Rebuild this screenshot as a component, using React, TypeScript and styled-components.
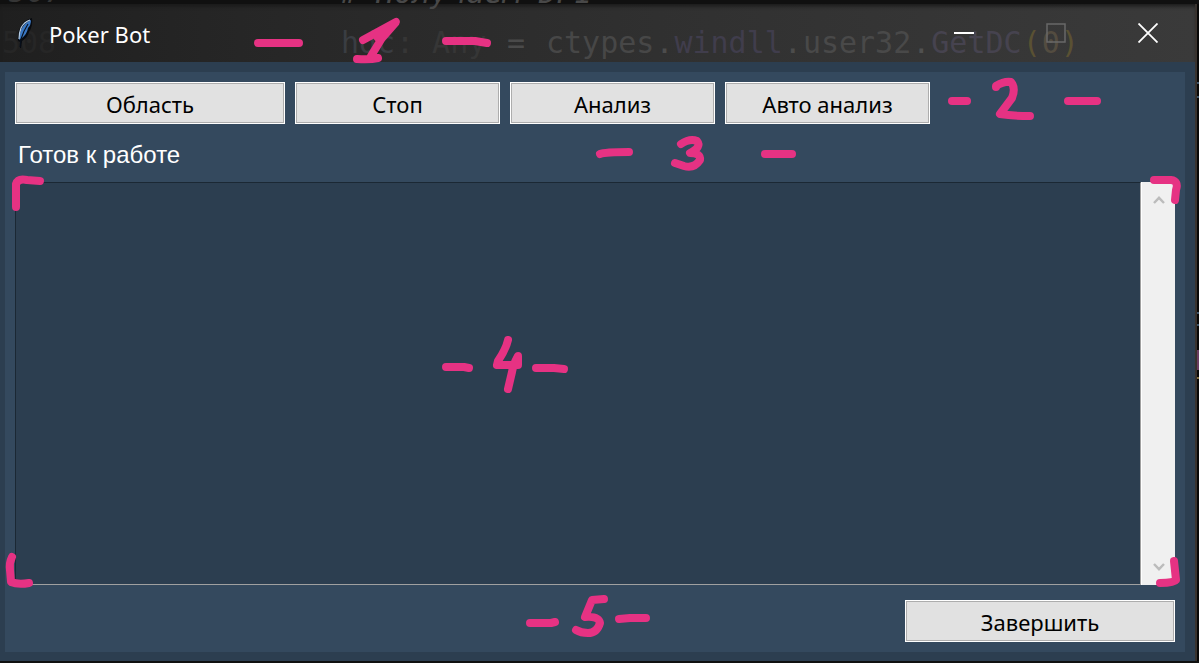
import React from "react";
import styled, { createGlobalStyle } from "styled-components";

const GlobalStyle = createGlobalStyle`
  *, *::before, *::after { box-sizing: border-box; }
  body { margin: 0; background: #0c0c0c; }
`;

const uiFont = `"Noto Sans", "Open Sans", sans-serif`;

const Desktop = styled.div`
  position: relative;
  display: flex;
  min-height: 100vh;
  padding: 4px 0 2px;
  background: #101010;
  overflow: hidden;
`;

const AppWindow = styled.main`
  flex: 1;
  min-width: 0;
  display: flex;
  flex-direction: column;
  background: #2c3e50;
`;

const EdgeStrip = styled.svg`
  flex: none;
  width: 4px;
  height: 657px;
`;

const TitleBar = styled.header`
  position: relative;
  height: 58px;
  display: flex;
  align-items: center;
  padding: 0 0 0 14px;
  gap: 15px;
  background: linear-gradient(90deg, #1f1f1f 0%, #262626 20%, #303030 55%, #3a3a3a 100%);
  box-shadow: inset 0 4px 4px -2px #181818;
`;

const Feather = styled.svg`
  position: relative;
  width: 20px;
  height: 32px;
`;

const Title = styled.h1`
  position: relative;
  flex: 1;
  margin: 0;
  padding-top: 2px;
  font: 400 22px/32px ${uiFont};
  color: #fff;
`;

const Backdrop = styled.div`
  position: absolute;
  inset: 0;
  pointer-events: none;
  white-space: pre;
  font: 30px/36px "DejaVu Sans Mono", monospace;
`;

const CodeRun = styled.div<{ $x: number; $y: number; $color: string; $italic?: boolean }>`
  position: absolute;
  left: ${(p) => p.$x}px;
  top: ${(p) => p.$y}px;
  display: flex;
  gap: 1px;
  color: ${(p) => p.$color};
  font-style: ${(p) => (p.$italic ? "italic" : "normal")};
`;

const Token = styled.span<{ $color: string }>`
  color: ${(p) => p.$color};
`;

const Caption = styled.div`
  position: relative;
  display: flex;
  align-self: stretch;
  margin-right: 1px;
`;

const CaptionButton = styled.button`
  display: grid;
  place-items: center;
  width: 92px;
  padding: 0;
  border: 0;
  background: transparent;
  color: #fff;
  &:disabled { color: #686868; }
`;

const Panel = styled.section`
  flex: 1;
  display: flex;
  flex-direction: column;
  margin: 10px 10px 9px 5px;
  padding: 10px;
  background: #34495e;
`;

const Toolbar = styled.div`
  display: flex;
  gap: 10px;
`;

const PushButton = styled.button<{ $wide?: boolean }>`
  width: ${(p) => (p.$wide ? 270 : 205)}px;
  height: 42px;
  padding: 2px 0 0;
  border: 1px solid #fff;
  box-shadow: inset 0 0 0 1px #adadad;
  background: #e1e1e1;
  color: #000;
  font: 22px/32px ${uiFont};
`;

const Status = styled.p`
  margin: 14px 0 10px;
  padding: 0 3px;
  font: 24px/34px "Liberation Sans", Arial, sans-serif;
  color: #fff;
`;

const LogArea = styled.div`
  flex: 1;
  display: flex;
  min-height: 200px;
`;

const Log = styled.textarea`
  flex: 1;
  min-width: 0;
  margin: 0;
  padding: 4px;
  resize: none;
  outline: 0;
  border: 1px solid;
  border-color: #1b2834 #a0a0a0 #a0a0a0 #1b2834;
  border-radius: 0;
  background: #2c3e50;
  color: #fff;
  font: 22px/32px ${uiFont};
`;

const ScrollTrack = styled.div`
  width: 34px;
  display: flex;
  flex-direction: column;
  justify-content: space-between;
  border-left: 1px solid #fff;
  background: #f0f0f0;
`;

const ScrollButton = styled.button`
  display: grid;
  place-items: center;
  height: 36px;
  padding: 0;
  border: 0;
  background: transparent;
`;

const Footer = styled.footer`
  display: flex;
  justify-content: flex-end;
  padding-top: 15px;
`;

const Marker = styled.svg`
  position: absolute;
  inset: 0;
  width: 100%;
  height: 100%;
  pointer-events: none;
  fill: none;
  stroke: #e63283;
  stroke-width: 8;
  stroke-linecap: round;
  stroke-linejoin: round;
`;

const callTokens: [string, string][] = [
  ["ctypes", "#474747"],
  [".", "#4c4c4c"],
  ["windll", "#403d4c"],
  [".", "#4c4c4c"],
  ["user32", "#494949"],
  [".", "#505050"],
  ["GetDC", "#46434f"],
  ["(", "#5a5133"],
  ["0", "#534c40"],
  [")", "#5a5133"],
];

const strokes = [
  "M258 43H299",
  "M363 40L396 22L382 38L371 56M378 38L390 28M357 59Q370 60 378 58",
  "M446 41H475L487 43",
  "M952 101H967",
  "M996 87V86Q1004 81 1011 82Q1016 88 1012 98L1000 114Q1012 116 1030 116",
  "M1068 101H1097",
  "M600 154Q605 152 629 152",
  "M681 144Q690 138 697 141Q702 147 690 153Q701 153 700 160Q694 169 684 166L675 163",
  "M765 154H792",
  "M446 367H464L469 368",
  "M508 340Q506 349 498 361L497 365H518V356Q513 365 512 372L508 389",
  "M536 368H554L564 369",
  "M530 623H551L555 622",
  "M604 599L592 600L585 617Q599 616 600 623Q597 633 588 633Q581 633 576 630",
  "M619 619L630 618H646",
  "M16 207V184Q18 178 27 180L40 181",
  "M1154 180H1171Q1179 181 1176 190L1175 200",
  "M12 557Q9 563 10 570L11 582Q18 585 29 583",
  "M1174 561L1176 580Q1174 583 1160 583",
];

function Chevron({ down }: { down?: boolean }) {
  return (
    <svg width="12" height="10" viewBox="0 0 12 10" fill="none" stroke="#bcbcbc" strokeWidth="2.4">
      <path d={down ? "M1 2L6 7.2L11 2" : "M1 8L6 2.8L11 8"} />
    </svg>
  );
}

export default function App() {
  return (
    <Desktop>
      <GlobalStyle />
      <AppWindow>
        <TitleBar>
          <Backdrop aria-hidden="true">
            <CodeRun $x={9} $y={-30} $color="#353535" $italic>507</CodeRun>
            <CodeRun $x={340} $y={-29} $color="#484848" $italic># Получаем DPI</CodeRun>
            <CodeRun $x={2} $y={21} $color="#262626">508</CodeRun>
            <CodeRun $x={341} $y={21} $color="#3a3d42">hdc</CodeRun>
            <CodeRun $x={396} $y={21} $color="#363636">: Any</CodeRun>
            <CodeRun $x={507} $y={21} $color="#4a4a4a">=</CodeRun>
            <CodeRun $x={546} $y={21} $color="#474747">
              {callTokens.map(([text, color], i) => (
                <Token key={i} $color={color}>{text}</Token>
              ))}
            </CodeRun>
          </Backdrop>
          <Feather viewBox="0 0 20 32" aria-hidden="true">
            <path d="M18 1Q10 3 7 9Q3 16 4 24L6 25L6 31H7L8 24Q14 20 15 15Q19 9 18 1Z" fill="#080b10" />
            <path d="M17 3Q10 6 7 13Q5 18 5 23L8 21Q13 17 14 11Q17 8 17 3Z" fill="#3a78c4" />
            <path d="M16 3Q10 5 7 11Q5 16 5 22" fill="none" stroke="#b7cee5" strokeWidth="1.2" />
            <path d="M14 7Q10 13 7 22L6 30" fill="none" stroke="#07101c" strokeWidth="1.1" />
          </Feather>
          <Title>Poker Bot</Title>
          <Caption>
            <CaptionButton aria-label="Свернуть">
              <svg width="20" height="20"><path d="M0 10H20" stroke="currentColor" strokeWidth="2" /></svg>
            </CaptionButton>
            <CaptionButton aria-label="Развернуть" disabled>
              <svg width="20" height="20" fill="none"><rect x="1" y="1" width="18" height="18" stroke="currentColor" strokeWidth="1.5" /></svg>
            </CaptionButton>
            <CaptionButton aria-label="Закрыть">
              <svg width="20" height="20"><path d="M.5 .5L19.5 19.5M19.5 .5L.5 19.5" stroke="currentColor" strokeWidth="1.8" /></svg>
            </CaptionButton>
          </Caption>
        </TitleBar>
        <Panel>
          <Toolbar>
            <PushButton $wide>Область</PushButton>
            <PushButton>Стоп</PushButton>
            <PushButton>Анализ</PushButton>
            <PushButton>Авто анализ</PushButton>
          </Toolbar>
          <Status role="status">Готов к работе</Status>
          <LogArea>
            <Log aria-label="Журнал" readOnly />
            <ScrollTrack>
              <ScrollButton aria-label="Вверх"><Chevron /></ScrollButton>
              <ScrollButton aria-label="Вниз"><Chevron down /></ScrollButton>
            </ScrollTrack>
          </LogArea>
          <Footer>
            <PushButton $wide>Завершить</PushButton>
          </Footer>
        </Panel>
      </AppWindow>
      <EdgeStrip aria-hidden="true">
        <rect width="4" height="657" fill="#080808" />
        <rect x="0" width="2" height="657" fill="#38322e" />
        <path d="M2 79H4M2 93H4M2 309H4M2 321H4" stroke="#3c5368" strokeWidth="2" />
        <rect x="2" y="346" width="2" height="20" fill="#6a3d62" />
        <path d="M2 374H4" stroke="#82703f" strokeWidth="2" />
      </EdgeStrip>
      <Marker viewBox="0 0 1199 663" aria-hidden="true">
        {strokes.map((d) => <path key={d} d={d} />)}
      </Marker>
    </Desktop>
  );
}
